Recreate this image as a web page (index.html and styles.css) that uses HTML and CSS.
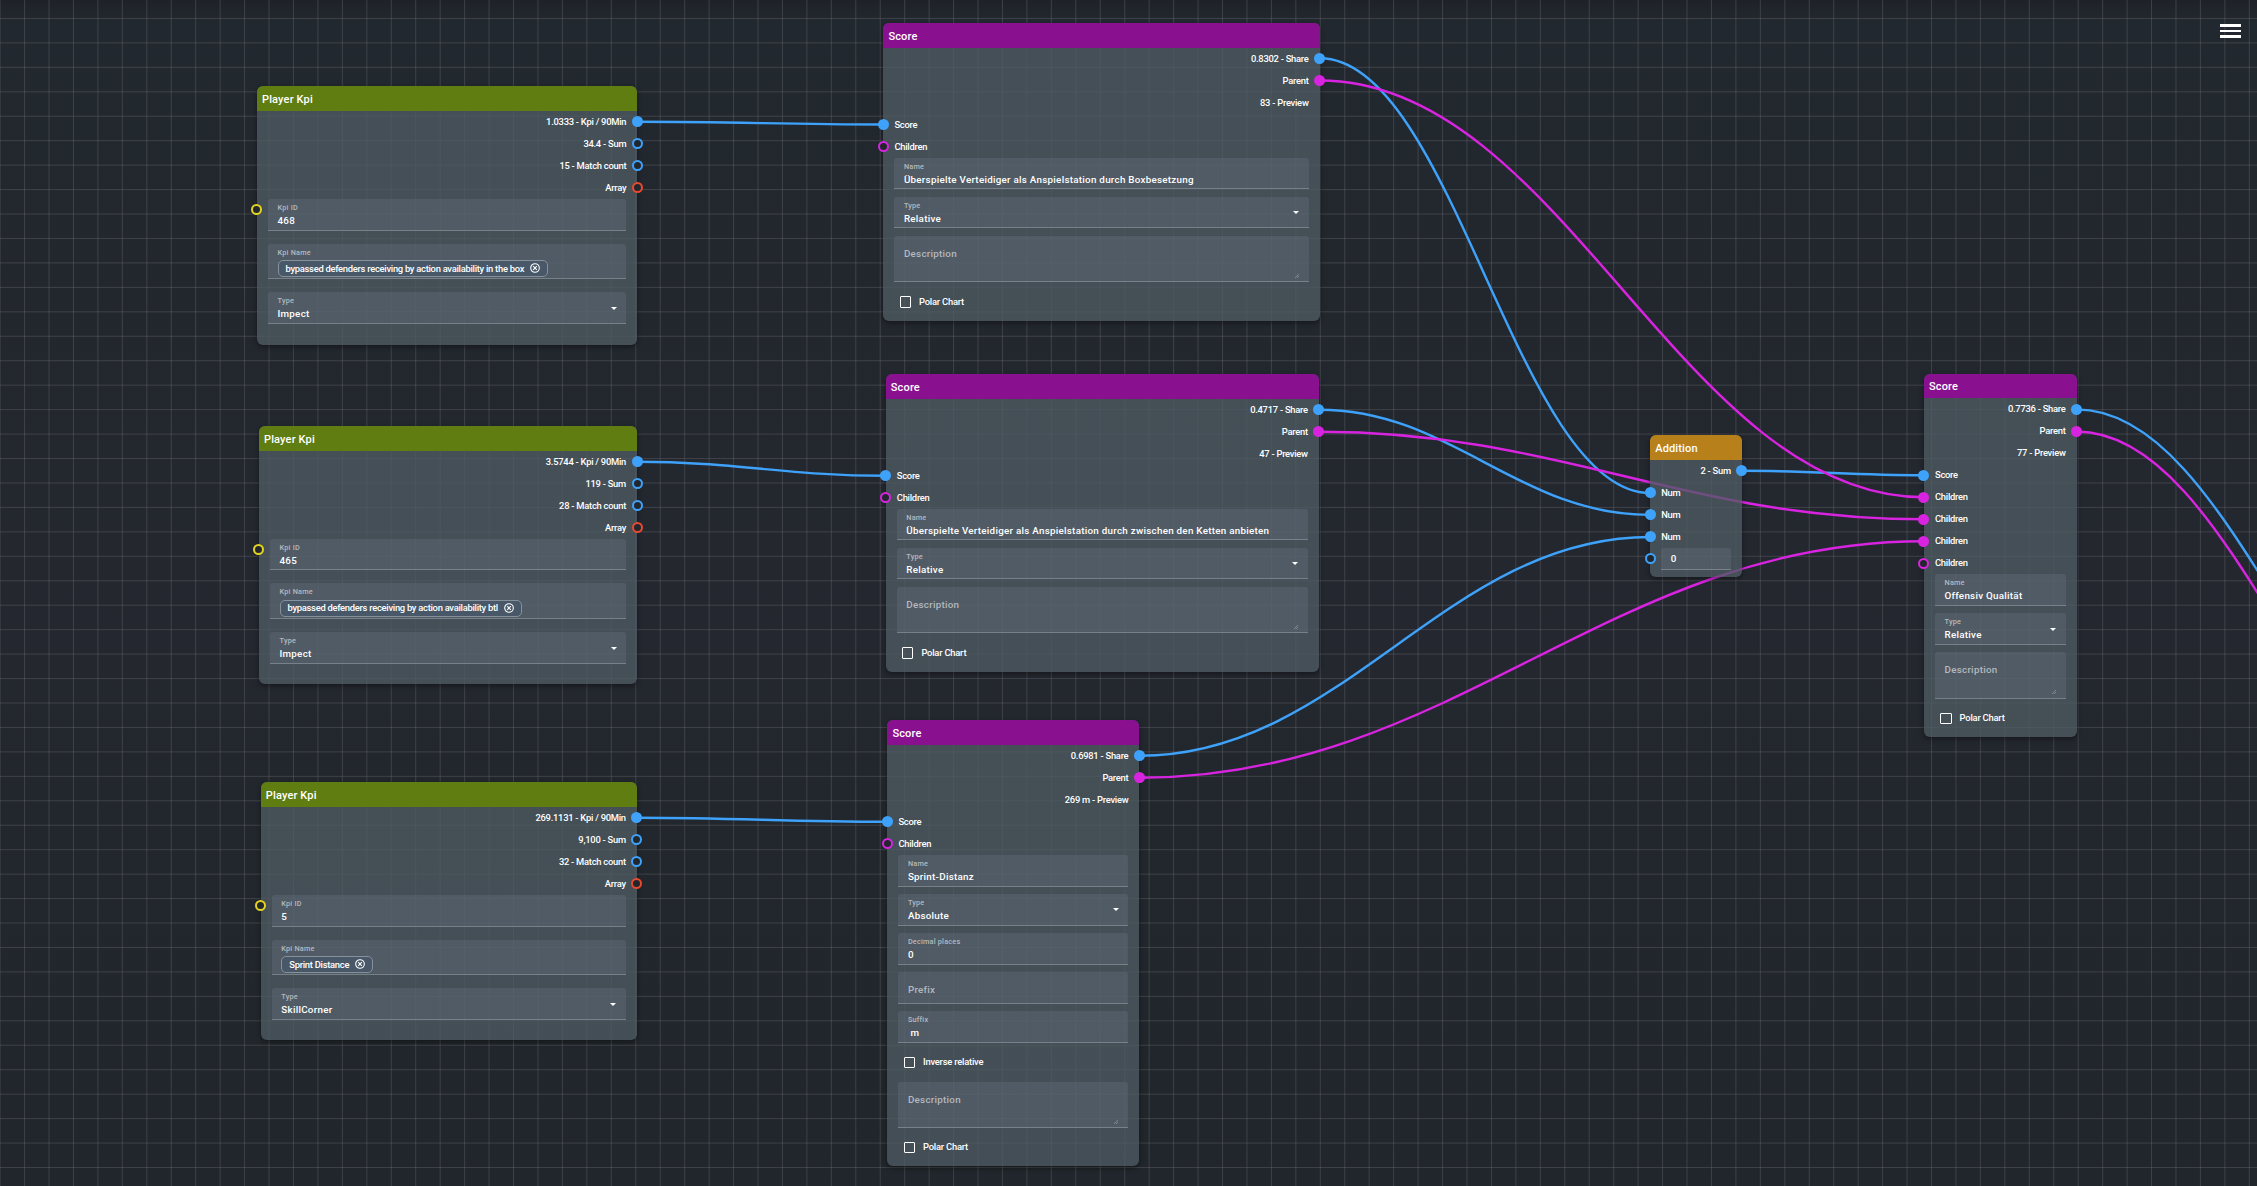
FILE: index.html
```html
<!DOCTYPE html>
<html lang="de">
<head>
<meta charset="utf-8">
<title>Score Editor</title>
<link rel="stylesheet" href="styles.css">
</head>
<body>
<main class="editor">
  <svg class="wires" width="2257" height="1186" viewBox="0 0 2257 1186">
    <g class="wire-num">
      <path d="M637 121.7C735.8 121.7 784.7 124.5 883.5 124.5"/>
      <path d="M637 461.8C736.6 461.8 786.4 475.8 886 475.8"/>
      <path d="M636.8 817.7C737 817.7 787 821.8 887.5 821.8"/>
      <path d="M1320 58.3C1452 58.3 1518 493 1650 493"/>
      <path d="M1319 409.8C1451.4 409.8 1517.6 514.9 1650 514.9"/>
      <path d="M1139.5 755.8C1343.7 755.8 1445.8 537 1650 537"/>
      <path d="M1742 470.8C1814.8 470.8 1851.2 475.2 1924 475.2"/>
      <path d="M2076.5 409.4C2236.5 409.4 2316.5 792 2476.5 792"/>
    </g>
    <g class="wire-rel">
      <path d="M1320 80.5C1561.6 80.5 1682.4 497.2 1924 497.2"/>
      <path d="M1319 431.8C1561 431.8 1682 519.2 1924 519.2"/>
      <path d="M1139.5 777.8C1453.3 777.8 1610.2 541.3 1924 541.3"/>
      <path d="M2076.5 431.5C2236.5 431.5 2316.5 814 2476.5 814"/>
    </g>
  </svg>

  <section class="node kpi k1">
    <h2>Player Kpi</h2>
    <div class="row out">1.0333 - Kpi / 90Min<i class="pin num on"></i></div>
    <div class="row out">34.4 - Sum<i class="pin num"></i></div>
    <div class="row out">15 - Match count<i class="pin num"></i></div>
    <div class="row out">Array<i class="pin arr"></i></div>
    <div class="field"><i class="pin id"></i><label>Kpi ID</label><span>468</span></div>
    <div class="field tags"><label>Kpi Name</label><span class="chip">bypassed defenders receiving by action availability in the box<svg viewBox="0 0 10 10"><circle cx="5" cy="5" r="4.3"/><path d="M3.2 3.2l3.6 3.6M6.8 3.2L3.2 6.8"/></svg></span></div>
    <div class="field select"><label>Type</label><span>Impect</span></div>
  </section>

  <section class="node kpi k2">
    <h2>Player Kpi</h2>
    <div class="row out">3.5744 - Kpi / 90Min<i class="pin num on"></i></div>
    <div class="row out">119 - Sum<i class="pin num"></i></div>
    <div class="row out">28 - Match count<i class="pin num"></i></div>
    <div class="row out">Array<i class="pin arr"></i></div>
    <div class="field"><i class="pin id"></i><label>Kpi ID</label><span>465</span></div>
    <div class="field tags"><label>Kpi Name</label><span class="chip">bypassed defenders receiving by action availability btl<svg viewBox="0 0 10 10"><circle cx="5" cy="5" r="4.3"/><path d="M3.2 3.2l3.6 3.6M6.8 3.2L3.2 6.8"/></svg></span></div>
    <div class="field select"><label>Type</label><span>Impect</span></div>
  </section>

  <section class="node kpi k3">
    <h2>Player Kpi</h2>
    <div class="row out">269.1131 - Kpi / 90Min<i class="pin num on"></i></div>
    <div class="row out">9,100 - Sum<i class="pin num"></i></div>
    <div class="row out">32 - Match count<i class="pin num"></i></div>
    <div class="row out">Array<i class="pin arr"></i></div>
    <div class="field"><i class="pin id"></i><label>Kpi ID</label><span>5</span></div>
    <div class="field tags"><label>Kpi Name</label><span class="chip">Sprint Distance<svg viewBox="0 0 10 10"><circle cx="5" cy="5" r="4.3"/><path d="M3.2 3.2l3.6 3.6M6.8 3.2L3.2 6.8"/></svg></span></div>
    <div class="field select"><label>Type</label><span>SkillCorner</span></div>
  </section>

  <section class="node score s1">
    <h2>Score</h2>
    <div class="row out">0.8302 - Share<i class="pin num on"></i></div>
    <div class="row out">Parent<i class="pin rel on"></i></div>
    <div class="row out">83 - Preview</div>
    <div class="row">Score<i class="pin num on"></i></div>
    <div class="row">Children<i class="pin rel"></i></div>
    <div class="field"><label>Name</label><span>Überspielte Verteidiger als Anspielstation durch Boxbesetzung</span></div>
    <div class="field select"><label>Type</label><span>Relative</span></div>
    <div class="field area"><span>Description</span><svg class="grip" viewBox="0 0 5 5"><path d="M0 5L5 0M2.5 5L5 2.5"/></svg></div>
    <div class="check"><i class="box"></i>Polar Chart</div>
  </section>

  <section class="node score s2">
    <h2>Score</h2>
    <div class="row out">0.4717 - Share<i class="pin num on"></i></div>
    <div class="row out">Parent<i class="pin rel on"></i></div>
    <div class="row out">47 - Preview</div>
    <div class="row">Score<i class="pin num on"></i></div>
    <div class="row">Children<i class="pin rel"></i></div>
    <div class="field"><label>Name</label><span>Überspielte Verteidiger als Anspielstation durch zwischen den Ketten anbieten</span></div>
    <div class="field select"><label>Type</label><span>Relative</span></div>
    <div class="field area"><span>Description</span><svg class="grip" viewBox="0 0 5 5"><path d="M0 5L5 0M2.5 5L5 2.5"/></svg></div>
    <div class="check"><i class="box"></i>Polar Chart</div>
  </section>

  <section class="node score s3">
    <h2>Score</h2>
    <div class="row out">0.6981 - Share<i class="pin num on"></i></div>
    <div class="row out">Parent<i class="pin rel on"></i></div>
    <div class="row out">269 m - Preview</div>
    <div class="row">Score<i class="pin num on"></i></div>
    <div class="row">Children<i class="pin rel"></i></div>
    <div class="field"><label>Name</label><span>Sprint-Distanz</span></div>
    <div class="field select"><label>Type</label><span>Absolute</span></div>
    <div class="field"><label>Decimal places</label><span>0</span></div>
    <div class="field empty"><span>Prefix</span></div>
    <div class="field"><label>Suffix</label><span>&nbsp;m</span></div>
    <div class="check"><i class="box"></i>Inverse relative</div>
    <div class="field area"><span>Description</span><svg class="grip" viewBox="0 0 5 5"><path d="M0 5L5 0M2.5 5L5 2.5"/></svg></div>
    <div class="check"><i class="box"></i>Polar Chart</div>
  </section>

  <section class="node addition a1">
    <h2>Addition</h2>
    <div class="row out">2 - Sum<i class="pin num on"></i></div>
    <div class="row">Num<i class="pin num on"></i></div>
    <div class="row">Num<i class="pin num on"></i></div>
    <div class="row">Num<i class="pin num on"></i></div>
    <div class="field slim"><i class="pin num"></i><span>0</span></div>
  </section>

  <section class="node score s4">
    <h2>Score</h2>
    <div class="row out">0.7736 - Share<i class="pin num on"></i></div>
    <div class="row out">Parent<i class="pin rel on"></i></div>
    <div class="row out">77 - Preview</div>
    <div class="row">Score<i class="pin num on"></i></div>
    <div class="row">Children<i class="pin rel on"></i></div>
    <div class="row">Children<i class="pin rel on"></i></div>
    <div class="row">Children<i class="pin rel on"></i></div>
    <div class="row">Children<i class="pin rel"></i></div>
    <div class="field"><label>Name</label><span>Offensiv Qualität</span></div>
    <div class="field select"><label>Type</label><span>Relative</span></div>
    <div class="field area"><span>Description</span><svg class="grip" viewBox="0 0 5 5"><path d="M0 5L5 0M2.5 5L5 2.5"/></svg></div>
    <div class="check"><i class="box"></i>Polar Chart</div>
  </section>

  <button class="menu" aria-label="Menu"><i></i><i></i><i></i></button>
</main>
</body>
</html>
```
FILE: styles.css
```css
* { box-sizing: border-box; }
body { margin: 0; background: #22272e; }

.editor {
  --line: rgba(120, 118, 122, .33);
  position: relative;
  width: 2257px;
  height: 1186px;
  overflow: hidden;
  font: 500 9.4px/22.6px Roboto, sans-serif;
  letter-spacing: -.26px;
  color: #fff;
  background:
    repeating-linear-gradient(90deg, var(--line) .1px, transparent 1.1px, transparent 23.548px, var(--line) 24.548px),
    repeating-linear-gradient(180deg, var(--line) -6px, transparent -5px, transparent 17.448px, var(--line) 18.448px),
    linear-gradient(180deg, #1e2228 0, #22282f 20px, #22272e 300px, #24272f 640px, #21272c 820px, #20262b 100%);
}

.wires { position: absolute; left: 0; top: 0; fill: none; stroke-width: 2.4; }
.wire-num { stroke: #3ea2fa; }
.wire-rel { stroke: #d824e0; }

.node {
  position: absolute;
  padding: 0 11px;
  border-radius: 6px;
  background: rgba(79, 91, 99, .77);
  box-shadow: 0 2px 5px rgba(0, 0, 0, .4);
}
.k1 { left: 257px; top: 86.4px; width: 380.3px; height: 258.2px; }
.k2 { left: 259px; top: 426.2px; width: 378px; height: 258px; }
.k3 { left: 260.8px; top: 782.4px; width: 376px; height: 258px; }
.s1 { left: 883.4px; top: 23.2px; width: 436.2px; height: 297.4px; }
.s2 { left: 885.8px; top: 374.2px; width: 433px; height: 297.4px; }
.s3 { left: 887.4px; top: 720.4px; width: 252px; height: 445.4px; }
.s4 { left: 1924px; top: 373.8px; width: 152.6px; height: 363px; }
.a1 { left: 1650.2px; top: 435.2px; width: 91.7px; height: 142px; }

.node h2 {
  height: 24.4px;
  margin: 0 -11px;
  padding: 1.5px 5px 0;
  border-radius: 6px 6px 0 0;
  font: 500 11px/24.4px Roboto, sans-serif;
  letter-spacing: .15px;
}
.kpi h2 { background: #607d12; }
.score h2 { background: #891190; }
.addition h2 { background: #b8801b; }

.row { position: relative; height: 22px; }
.out { text-align: right; }

.pin {
  position: absolute;
  left: -16.6px;
  top: 5.5px;
  width: 11px;
  height: 11px;
  border: 2px solid;
  border-radius: 50%;
  background: #22272e;
}
.out .pin { left: auto; right: -16.5px; }
.pin.num { border-color: #3ea2fa; }
.pin.rel { border-color: #d824e0; }
.pin.arr { border-color: #e8492f; }
.pin.id { border-color: #e3d321; }
.pin.num.on { background: #3ea2fa; }
.pin.rel.on { background: #d824e0; }

.field {
  position: relative;
  display: flex;
  flex-direction: column;
  height: 31.8px;
  margin-bottom: 7.3px;
  padding: 4.1px 9.5px 0;
  border-bottom: 1px solid #77818a;
  border-radius: 2.5px 2.5px 0 0;
  background: rgba(109, 119, 137, .3);
  font-size: 9.8px;
  line-height: 15.2px;
  letter-spacing: .27px;
}
.kpi .field { margin-bottom: 13px; }
.kpi .tags { height: 35.8px; }
.field label { font-size: 7.3px; line-height: 10px; color: #b4b9be; letter-spacing: .2px; }
.select::after {
  content: "";
  position: absolute;
  right: 9.5px;
  top: 14.5px;
  border: 3px solid transparent;
  border-top-color: #fff;
  border-bottom: 0;
}
.field.area { height: 46.6px; padding-top: 10px; color: #b4b9be; }
.field.empty { padding-top: 9.6px; color: #b4b9be; }
.field.slim { height: 22px; padding: 3.7px 9.5px; }
.grip { position: absolute; right: 10px; bottom: 3.5px; width: 4px; height: 4px; stroke: #9aa1a8; stroke-width: .8; }

.chip {
  display: flex;
  align-items: center;
  align-self: flex-start;
  gap: 6px;
  height: 17px;
  margin-top: 2.1px;
  padding: 0 7px;
  border: 1px solid #87919b;
  border-radius: 5px;
  background: #485868;
  font-size: 9.4px;
  letter-spacing: -.275px;
}
.chip svg { width: 10px; height: 10px; fill: none; stroke: #fff; stroke-width: 1.1; }

.check { display: flex; align-items: center; gap: 8px; height: 24.4px; margin-bottom: 7px; padding-left: 5.3px; letter-spacing: -.22px; }
.box { width: 11.3px; height: 11.3px; border: 1.2px solid #fff; border-radius: 1px; }

.menu {
  position: absolute;
  left: 2220px;
  top: 24px;
  display: grid;
  gap: 3px;
  width: 21px;
  padding: 0;
  border: 0;
  background: none;
}
.menu i { height: 2.6px; background: #fff; }
```
